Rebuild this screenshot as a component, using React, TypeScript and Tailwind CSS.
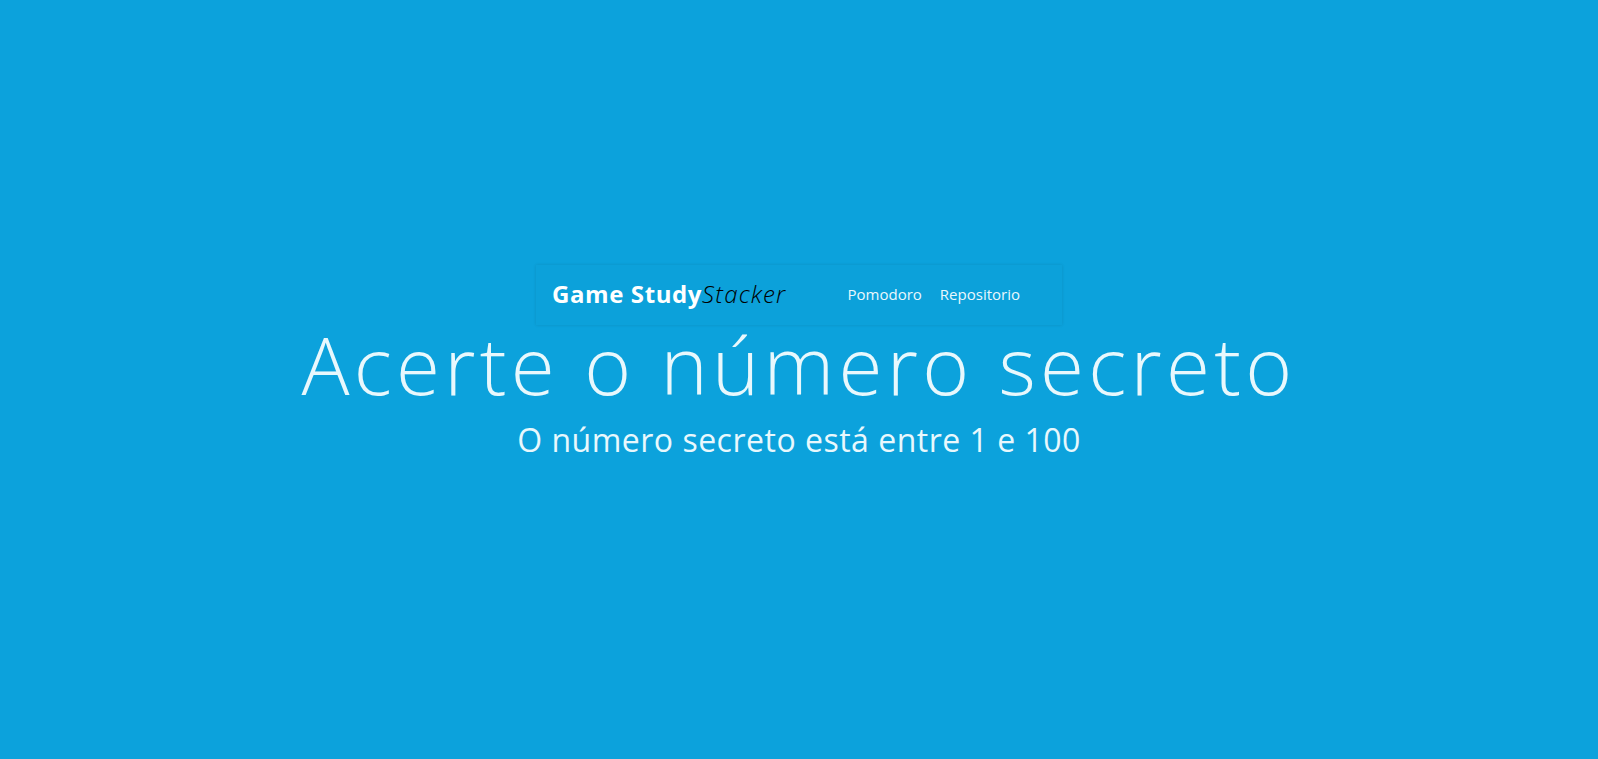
export default function App() {
  return (
    <div
      className="min-h-screen w-full bg-[#0ca2dc] flex flex-col items-center pt-[265px]"
      style={{ fontFamily: '"Open Sans", "DejaVu Sans", sans-serif' }}
    >
      <nav className="w-[526px] h-[60px] flex items-center px-4 pb-[2px] shadow-[0_0_3px_rgba(0,0,0,0.12)] bg-[#0ca1da]">
        <div className="flex items-baseline text-[24px] leading-[30px]">
          <span className="font-bold text-white tracking-[0.6px]">Game Study</span>
          <span className="italic text-black font-light tracking-[1.2px]">Stacker</span>
        </div>
        <div className="ml-auto mr-[26px] flex gap-[18px] text-[15px] text-[#eaf8fd]">
          <span>Pomodoro</span>
          <span>Repositorio</span>
        </div>
      </nav>
      <h1 className="text-[80px] leading-[72px] font-light text-[#e8f8fd] mt-[3px] tracking-[4.3px]">
        Acerte o número secreto
      </h1>
      <p className="text-[32px] leading-[40px] font-normal text-[#e8f8fd] mt-[20px] tracking-[0.5px]">
        O número secreto está entre 1 e 100
      </p>
    </div>
  );
}
